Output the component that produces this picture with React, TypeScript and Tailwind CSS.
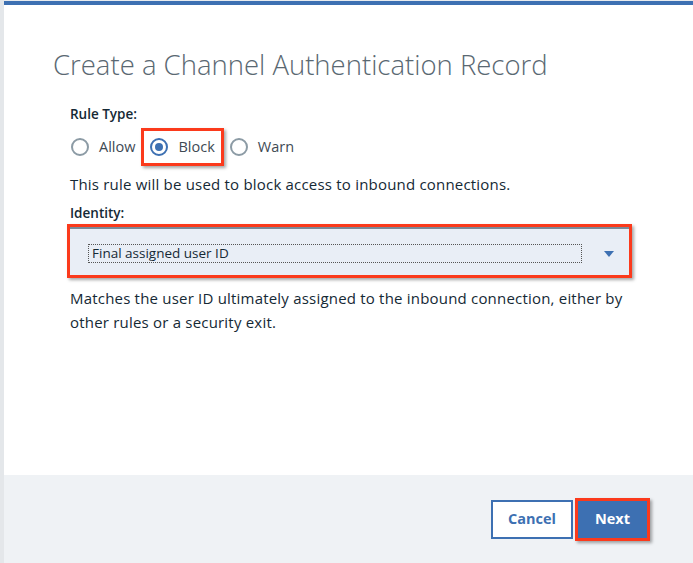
import { useState } from "react";

const options = ["Allow", "Block", "Warn"];

function Radio({ checked }: { checked: boolean }) {
  return (
    <span
      className={`flex h-[18px] w-[18px] shrink-0 items-center justify-center rounded-full border-2 ${
        checked ? "border-[#3d70b2]" : "border-[#8c9ba5]"
      }`}
    >
      {checked && <span className="h-2 w-2 rounded-full bg-[#3d70b2]" />}
    </span>
  );
}

export default function App() {
  const [rule, setRule] = useState("Block");

  return (
    <div className="flex h-[563px] w-[693px] overflow-hidden bg-[#e8ebee] font-['Open_Sans',sans-serif] text-[#152935]">
      <div className="w-1 shrink-0 bg-[#e4e7ea]" />
      <div className="mt-px flex flex-1 flex-col border-t-4 border-[#3d70b2] bg-white">
        <div className="flex-1 pl-[49px] pt-[43px]">
          <h1 className="text-[27.5px] font-light leading-[34px] text-[#5a6872]">
            Create a Channel Authentication Record
          </h1>

          <div className="mt-[23px] pl-[17px]">
            <p className="text-[13.5px] font-semibold leading-[18px]">Rule Type:</p>
            <div className="mt-[5px] flex items-center gap-[5px] text-sm">
              {options.map((o) => {
                const active = o === "Block";
                return (
                  <button
                    key={o}
                    onClick={() => setRule(o)}
                    className={`flex h-[38px] items-center gap-[10px] ${
                      active
                        ? "border-[3px] border-[#fb3a1c] px-[6px] shadow-[2px_2px_3px_rgba(0,0,0,0.35)]"
                        : "px-px"
                    }`}
                  >
                    <Radio checked={rule === o} />
                    <span className="text-[14.5px] text-[#3e4a54]">{o}</span>
                  </button>
                );
              })}
            </div>
            <p className="mt-[6px] text-[15px] leading-[24px] tracking-[0.2px]">
              This rule will be used to block access to inbound connections.
            </p>

            <p className="mt-[8px] text-[13.5px] font-semibold leading-[18px]">Identity:</p>
            <div className="ml-[-3px] mt-[2px] w-[565px] border-[3px] border-[#fb3a1c] shadow-[2px_2px_3px_rgba(0,0,0,0.35)]">
              <div className="flex h-[48px] items-center border-t-2 border-[#7a8a99] bg-[#e9eef6] pl-[18px] pr-[13px] pt-[3px]">
                <div className="flex h-[19px] flex-1 items-center border border-dotted border-[#555] pl-[3px] text-[13.5px] leading-none">
                  Final assigned user ID
                </div>
                <svg className="ml-[22px] mr-[2px]" width="10" height="6" viewBox="0 0 10 6">
                  <path d="M0 0h10L5 6z" fill="#3d70b2" />
                </svg>
              </div>
            </div>
            <p className="mt-[8px] w-[560px] text-[15px] leading-[24px] tracking-[0.2px]">
              Matches the user ID ultimately assigned to the inbound connection, either by
              other rules or a security exit.
            </p>
          </div>
        </div>

        <footer className="flex h-[88px] items-center justify-end gap-[2px] bg-[#eff2f5] pr-[43px]">
          <button className="h-[39px] w-[82px] border-2 border-[#3d70b2] bg-white text-[14.5px] font-bold text-[#3d70b2]">
            Cancel
          </button>
          <button className="h-[43px] w-[75px] border-[3px] border-[#fb3a1c] bg-[#3d70b2] text-[14.5px] font-bold text-white shadow-[2px_2px_3px_rgba(0,0,0,0.35)]">
            Next
          </button>
        </footer>
      </div>
    </div>
  );
}
